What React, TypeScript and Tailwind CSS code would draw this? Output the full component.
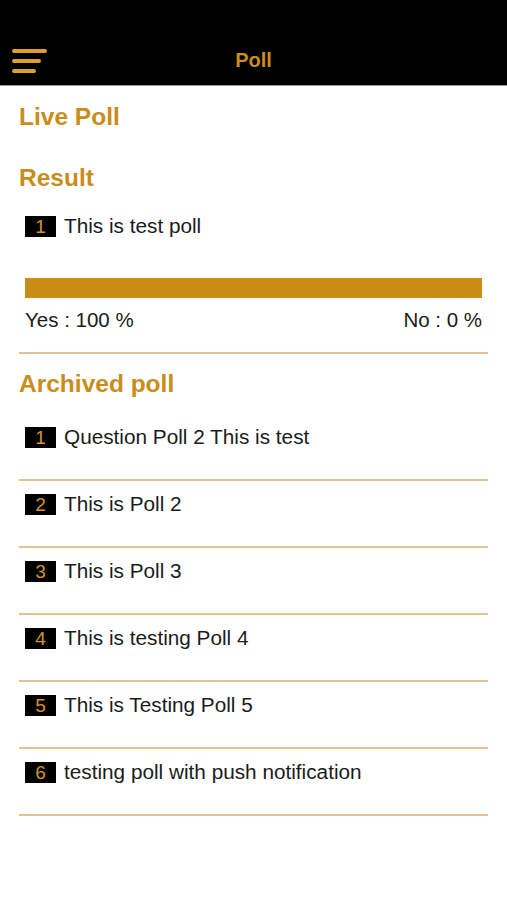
const GOLD = "text-[#c98d1c]";

const ARCHIVED = [
  "Question Poll 2 This is test",
  "This is Poll 2",
  "This is Poll 3",
  "This is testing Poll 4",
  "This is Testing Poll 5",
  "testing poll with push notification",
];

function Badge({ n }: { n: number }) {
  return (
    <span className="flex h-[21px] w-[31px] shrink-0 items-center justify-center bg-black text-[19px] leading-none text-[#d3952a]">
      {n}
    </span>
  );
}

function PollLine({ n, text }: { n: number; text: string }) {
  return (
    <div className="flex items-center gap-[8px] pl-[6px]">
      <Badge n={n} />
      <span className="text-[20.75px] leading-none text-[#1b1b1b]">{text}</span>
    </div>
  );
}

export default function App() {
  return (
    <div className="min-h-[900px] w-full bg-white font-['Liberation_Sans',Arial,sans-serif]">
      {/* Top bar */}
      <header className="h-[86px] border-b border-[#9a9a9a] bg-black pt-[34px]">
        <div className="relative flex h-[51px] items-center justify-center">
          <div className="absolute left-[12px] top-[15px] flex flex-col gap-[6px]">
            <span className="block h-[4px] w-[35px] rounded-full bg-[#dca02c]" />
            <span className="block h-[4px] w-[29px] rounded-full bg-[#dca02c]" />
            <span className="block h-[4px] w-[24px] rounded-full bg-[#dca02c]" />
          </div>
          <h1 className={`text-[20px] font-bold ${GOLD}`}>Poll</h1>
        </div>
      </header>

      <main className="px-[19px]">
        <div className="flex h-[62px] items-center">
          <h2 className={`text-[24.5px] font-bold leading-none ${GOLD}`}>Live Poll</h2>
        </div>
        <div className="flex h-[60px] items-center">
          <h2 className={`text-[24.5px] font-bold leading-none ${GOLD}`}>Result</h2>
        </div>
        <div className="flex h-[36px] items-center">
          <PollLine n={1} text="This is test poll" />
        </div>

        <div className="mx-[6px] mt-[34px] h-[20px] bg-[#c98c16]" />
        <div className="flex h-[44px] items-center justify-between px-[6px] text-[20.5px] leading-none text-[#1b1b1b]">
          <span>Yes : 100 %</span>
          <span>No : 0 %</span>
        </div>
        <div className="mt-[10px] h-[2px] bg-[#dfc48e]" />

        <div className="flex h-[60px] items-center">
          <h2 className={`text-[24.5px] font-bold leading-none ${GOLD}`}>Archived poll</h2>
        </div>

        {ARCHIVED.map((q, i) => (
          <div key={i} className="flex h-[67px] flex-col">
            <div className="flex h-[46px] items-center">
              <PollLine n={i + 1} text={q} />
            </div>
            <div className="mt-auto h-[2px] bg-[#dfc48e]" />
          </div>
        ))}
      </main>
    </div>
  );
}
